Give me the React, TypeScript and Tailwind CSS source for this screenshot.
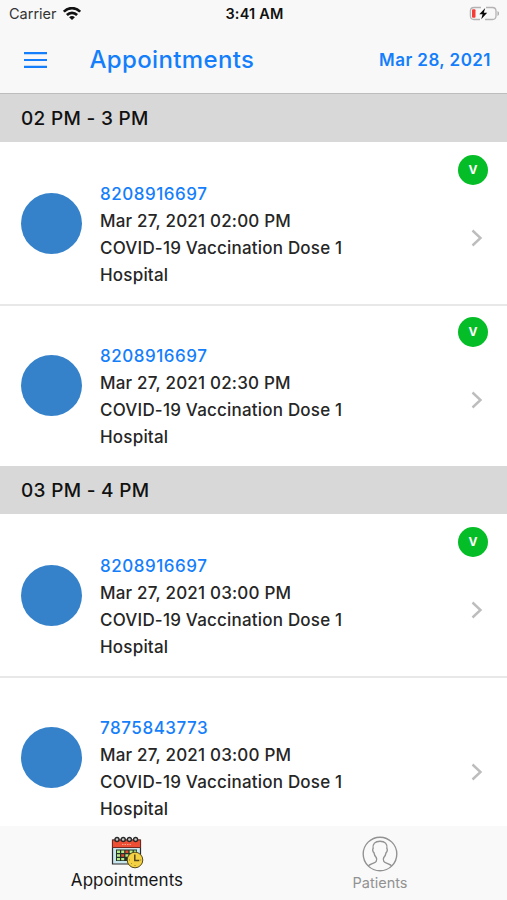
import React from "react";

type Appointment = { phone: string; time: string; vaccinated: boolean };
type Group = { label: string; items: Appointment[] };

const groups: Group[] = [
  {
    label: "02 PM - 3 PM",
    items: [
      { phone: "8208916697", time: "Mar 27, 2021 02:00 PM", vaccinated: true },
      { phone: "8208916697", time: "Mar 27, 2021 02:30 PM", vaccinated: true },
    ],
  },
  {
    label: "03 PM - 4 PM",
    items: [
      { phone: "8208916697", time: "Mar 27, 2021 03:00 PM", vaccinated: true },
      { phone: "7875843773", time: "Mar 27, 2021 03:00 PM", vaccinated: false },
    ],
  },
];

function WifiIcon() {
  return (
    <svg width="18" height="14" viewBox="0 0 18 14" fill="none" stroke="#111" strokeWidth="2.6">
      <path d="M.8 4.700C5.600-.1 12.400-.1 17.200 4.700" />
      <path d="M3.900 8C6.800 5.100 11.200 5.100 14.100 8" />
      <path d="M9 13.100 6.100 10.200C7.800 8.700 10.200 8.700 11.900 10.200Z" fill="#111" stroke="none" />
    </svg>
  );
}

function BatteryIcon() {
  return (
    <svg width="32" height="16" viewBox="0 0 32 16">
      <path d="M12 1.500H5A3.600 3.600 0 0 0 1.400 5v5A3.600 3.600 0 0 0 5 13.500h6M17 1.500h6.400A3.600 3.600 0 0 1 27 5v5a3.600 3.600 0 0 1-3.600 3.500H16" fill="none" stroke="#b4b2b2" strokeWidth="1.300" />
      <path d="M28.500 5c2 .9 2 4.100 0 5z" fill="#aaa" />
      <rect x="3" y="3.200" width="3.500" height="8.600" rx="1" fill="#f63b36" />
      <path d="M16.200 2 10.300 8.300h3.300l-1.400 4.900 6-6.400h-3.400z" fill="#090909" />
    </svg>
  );
}

function CalendarIcon() {
  return (
    <svg width="34" height="33" viewBox="0 0 34 33">
      <path d="M2.500 4h28v24h-28z" fill="#c7e6ee" stroke="#302a2c" strokeWidth="1.200" />
      <path d="M2.500 4h28v7.500h-28z" fill="#ee4e34" stroke="#702820" strokeWidth="1" />
      <path d="M12 8.500h9" stroke="#f8a38c" strokeWidth="1" strokeDasharray="1.500 1" />
      <path d="M6 13.500h21v11.500H6z" fill="#233129" />
      <path d="M7 14.500h3v2.500H7zM11.200 14.500h3v2.500h-3zM19.600 14.500h3v2.500h-3zM23.800 14.500h2.500v2.500h-2.500zM7 18.200h3v2.500H7zM15.400 18.200h3v2.500h-3zM7 21.900h3v2.300H7zM11.200 21.900h3v2.300h-3z" fill="#b6ec86" />
      <path d="M15.400 14.500h3v2.500h-3zM11.200 18.200h3v2.500h-3zM19.600 18.200h3v2.500h-3z" fill="#e24a31" />
      <g fill="#c9c9c9" stroke="#292929" strokeWidth="1.400">
        <circle cx="7" cy="3.500" r="2" />
        <circle cx="13.200" cy="3.500" r="2" />
        <circle cx="19.400" cy="3.500" r="2" />
        <circle cx="25.600" cy="3.500" r="2" />
      </g>
      <circle cx="25" cy="24" r="7.800" fill="#f3d143" stroke="#57491b" strokeWidth="1" />
      <path d="M24.800 18.500v6h4.500" fill="none" stroke="#54451c" strokeWidth="1.500" />
      <path d="M19 24h1M25 29v1M30.200 24h1M21 28l.7-.7" stroke="#786420" strokeWidth=".8" />
    </svg>
  );
}

function PatientIcon() {
  return (
    <svg width="36" height="36" viewBox="0 0 36 36" fill="none" stroke="#929292" strokeWidth="1.400">
      <circle cx="18" cy="18" r="16.800" />
      <path d="M6.300 30c1.200-1.900 6.600-2.700 7.900-4.600.6-1 .4-3.200 0-4-1.200-1.200-2-2.900-2.300-4.700-1.200-.8-1.500-3.400-.8-4.100C10.300 7.900 13.100 5.200 18 5.200s7.700 2.700 6.900 7.400c.7.700.4 3.300-.8 4.100-.3 1.800-1.100 3.500-2.300 4.700-.4.800-.6 3 0 4 1.300 1.900 6.700 2.700 7.900 4.600" />
    </svg>
  );
}

function Row({ item }: { item: Appointment }) {
  return (
    <li className="relative flex h-[162px] shrink-0 bg-white pl-5 not-first:shadow-[inset_0_2px_0_#e8e8e8]">
      <span className="ml-[0.500px] mt-[50.500px] size-[61px] shrink-0 rounded-full bg-[#3582ca]" />
      <div className="ml-[18.500px] mt-[39px] whitespace-nowrap text-[17px] font-[450] leading-[27px] tracking-[0.200px] text-[#262626]">
        <p className="tracking-[0.540px] text-[#147efb]">{item.phone}</p>
        <p>{item.time}</p>
        <p>COVID-19 Vaccination Dose 1</p>
        <p>Hospital</p>
      </div>
      <svg className="ml-auto mr-[23px] mt-[87px]" width="14" height="18" viewBox="0 0 14 18" fill="none" stroke="#bdbdbd" strokeWidth="2.400">
        <path d="m2.500 1.500 8 7.500-8 7.500" />
      </svg>
      {item.vaccinated && (
        <span className="absolute right-[19px] top-[12.500px] flex size-[30px] items-center justify-center rounded-full bg-[#05bd26] text-[12px] font-bold text-white">
          V
        </span>
      )}
    </li>
  );
}

export default function App() {
  return (
    <div className="flex h-[900px] w-[507px] flex-col overflow-hidden bg-white font-[Inter,'Liberation_Sans',sans-serif]">
      <header className="h-[94px] shrink-0 border-b border-[#bdbdbd] bg-[#f8f8f8]">
        <div className="grid h-[27px] grid-cols-3 items-center pl-[8px] pr-[6px] text-[14.500px] text-[#111]">
          <span className="flex items-center gap-[6px]">
            <span className="pl-px text-[#333]">Carrier</span>
            <WifiIcon />
          </span>
          <span className="text-center font-semibold tracking-[0.200px]">3:41 AM</span>
          <span className="flex justify-end">
            <BatteryIcon />
          </span>
        </div>
        <div className="flex h-[66px] items-center pl-6 pr-[16px] text-[#147efb]">
          <svg className="mb-px" width="23" height="16" viewBox="0 0 23 16" stroke="currentColor" strokeWidth="2.200">
            <path d="M0 1.200h23M0 8h23M0 14.800h23" />
          </svg>
          <h1 className="ml-[42.500px] text-[24px] font-medium tracking-[0.350px]">Appointments</h1>
          <span className="ml-auto pt-px text-[17px] font-semibold tracking-[0.450px]">Mar 28, 2021</span>
        </div>
      </header>
      <main className="flex min-h-0 flex-1 flex-col overflow-hidden">
        {groups.map((group) => (
          <section key={group.label} className="shrink-0">
            <h2 className="flex h-[48px] items-center bg-[#d8d8d8] pl-[21px] pt-[2px] text-[19px] font-medium tracking-[0.300px] text-[#111]">
              {group.label}
            </h2>
            <ul>
              {group.items.map((item, i) => (
                <Row key={i} item={item} />
              ))}
            </ul>
          </section>
        ))}
      </main>
      <nav className="flex h-[74px] shrink-0 bg-[#f9f9f9]">
        <div className="flex w-[254px] flex-col items-center pt-[10px]">
          <CalendarIcon />
          <span className="pt-px text-[17px] leading-[21px] tracking-[0.050px] text-[#161616]">Appointments</span>
        </div>
        <div className="flex flex-1 flex-col items-center pr-[1px] pt-[10px] text-[#929292]">
          <PatientIcon />
          <span className="text-[14.500px] leading-[21px]">Patients</span>
        </div>
      </nav>
    </div>
  );
}
